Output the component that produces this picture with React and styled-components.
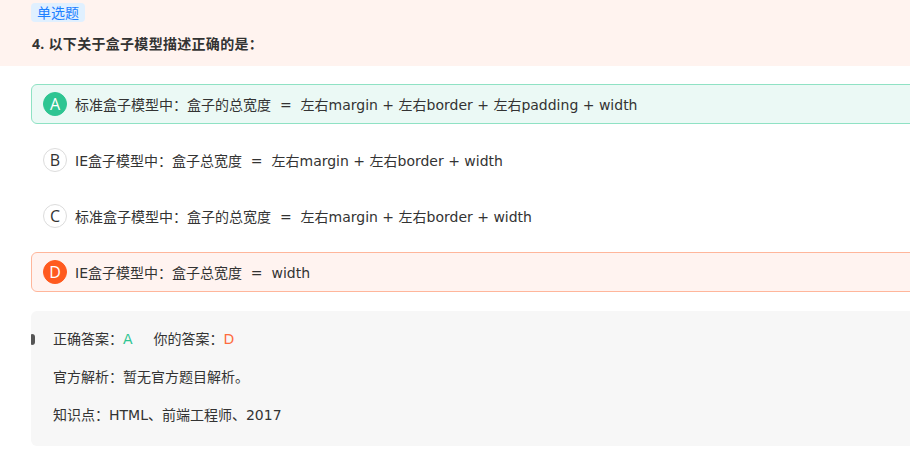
import React from "react";
import styled, { createGlobalStyle } from "styled-components";

const Global = createGlobalStyle`
  html, body { margin: 0; padding: 0; background: #fff; overflow: hidden; }
  body { font-family: "DejaVu Sans", "Noto Sans CJK SC", sans-serif; color: #333; font-size: 14px; }
`;

const Page = styled.div`
  width: 910px;
  height: 449px;
  overflow: hidden;
`;

const Header = styled.div`
  background: #fff3ef;
  height: 66px;
  padding: 3px 0 0 31px;
  box-sizing: border-box;
`;

const Tag = styled.span`
  display: inline-block;
  height: 19px;
  line-height: 19px;
  padding: 0 6px;
  border-radius: 4px;
  background: #e0f0ff;
  color: #1e80ff;
  font-family: "Noto Sans CJK SC", sans-serif;
  font-size: 14px;
`;

const Title = styled.div`
  margin-top: 12px;
  margin-left: 1px;
  font-family: "Open Sans", "Noto Sans CJK SC", sans-serif;
  font-weight: bold;
  font-size: 14px;
  line-height: 20px;
  letter-spacing: 0.3px;
  color: #333;
`;

const Body = styled.div`
  padding: 18px 0 0 31px;
`;

const Options = styled.div`
  display: flex;
  flex-direction: column;
  gap: 16px;
  margin-right: -20px;
`;

const variants = {
  right: { bg: "#ebf9f5", border: "#8fe2c4", circle: "#2ec592", circleBorder: "#2ec592", letter: "#fff" },
  wrong: { bg: "#fff3f0", border: "#ffb69b", circle: "#ff5a1f", circleBorder: "#ff5a1f", letter: "#fff" },
  none: { bg: "transparent", border: "transparent", circle: "#fff", circleBorder: "#dcdcdc", letter: "#333" },
};

const Option = styled.div`
  display: flex;
  align-items: center;
  gap: 8px;
  height: 40px;
  box-sizing: border-box;
  padding-left: 11px;
  border: 1px solid ${(p) => variants[p.$state].border};
  background: ${(p) => variants[p.$state].bg};
  border-radius: 6px;
`;

const Circle = styled.span`
  width: 24px;
  height: 24px;
  box-sizing: border-box;
  border-radius: 50%;
  display: flex;
  align-items: center;
  justify-content: center;
  background: ${(p) => variants[p.$state].circle};
  border: 1px solid ${(p) => variants[p.$state].circleBorder};
  color: ${(p) => variants[p.$state].letter};
  font-family: "Open Sans", sans-serif;
  font-size: 16px;
  line-height: 1;
  flex-shrink: 0;
`;

const OptText = styled.span`
  font-size: 14px;
  color: #333;
  white-space: pre;
`;

const Analysis = styled.div`
  position: relative;
  margin-top: 19px;
  margin-right: -20px;
  background: #f7f7f7;
  border-radius: 6px;
  padding: 18px 0 21px 22px;
  display: flex;
  flex-direction: column;
  gap: 18px;
  &::before {
    content: "";
    position: absolute;
    left: 0;
    top: 23px;
    width: 4px;
    height: 11px;
    background: #555;
    border-radius: 1px 3px 3px 1px;
  }
`;

const Line = styled.div`
  line-height: 20px;
  font-size: 14px;
  color: #333;
`;

const Ans = styled.span`
  color: ${(p) => p.$color};
  margin-right: ${(p) => p.$mr || 0}px;
`;

const options = [
  { k: "A", s: "right", t: "标准盒子模型中：盒子的总宽度  =  左右margin + 左右border + 左右padding + width" },
  { k: "B", s: "none", t: "IE盒子模型中：盒子总宽度  =  左右margin + 左右border + width" },
  { k: "C", s: "none", t: "标准盒子模型中：盒子的总宽度  =  左右margin + 左右border + width" },
  { k: "D", s: "wrong", t: "IE盒子模型中：盒子总宽度  =  width" },
];

export default function App() {
  return (
    <Page>
      <Global />
      <Header>
        <Tag>单选题</Tag>
        <Title>4. 以下关于盒子模型描述正确的是：</Title>
      </Header>
      <Body>
        <Options>
          {options.map((o) => (
            <Option key={o.k} $state={o.s}>
              <Circle $state={o.s}>{o.k}</Circle>
              <OptText>{o.t}</OptText>
            </Option>
          ))}
        </Options>
        <Analysis>
          <Line>
            正确答案：<Ans $color="#2ec592" $mr={21}>A</Ans>你的答案：<Ans $color="#fe6c3d">D</Ans>
          </Line>
          <Line>官方解析：暂无官方题目解析。</Line>
          <Line>知识点：HTML、前端工程师、2017</Line>
        </Analysis>
      </Body>
    </Page>
  );
}
